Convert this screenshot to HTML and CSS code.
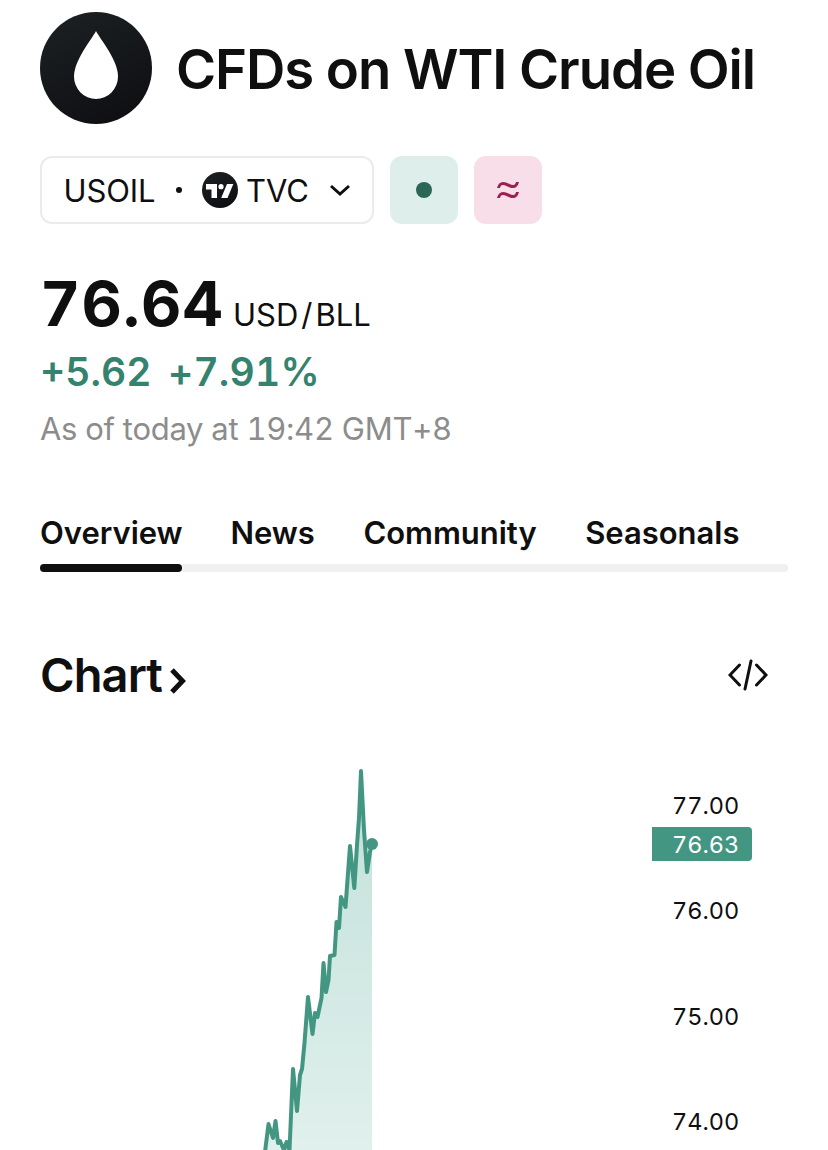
FILE: index.html
```html
<!DOCTYPE html>
<html lang="en">
  <head>
    <meta charset="UTF-8" />
    <meta name="viewport" content="width=device-width, initial-scale=1.0" />
    <title>USOIL</title>
    <link rel="stylesheet" href="styles.css">
  </head>
  <body>
    <div class="b-page">
      <div class="b-header">
        <svg class="b-header__logo" viewBox="0 0 112 112">
          <defs>
            <linearGradient id="logo-fill" x1="0.2" y1="0" x2="0.7" y2="1">
              <stop offset="0" stop-color="#1b2023" />
              <stop offset="1" stop-color="#0f0f12" />
            </linearGradient>
          </defs>
          <circle cx="56" cy="56" r="56" fill="url(#logo-fill)" />
          <path d="M56 19C60 27 78 48 78 64.500A22 22.500 0 0 1 34 64.500C34 48 52 27 56 19Z" fill="#fff" />
        </svg>
        <h1 class="b-header__title">CFDs on WTI Crude Oil</h1>
      </div>

      <div class="b-chips">
        <button class="b-symbol" type="button">
          <span class="b-symbol__name">USOIL</span>
          <span class="b-symbol__dot"></span>
          <svg class="b-symbol__logo" viewBox="0 0 36 36">
            <circle cx="18" cy="18" r="18" fill="url(#logo-fill)" />
            <path d="M4 12H15V26H9.500V17.500H4Z" fill="#fff" />
            <circle cx="19" cy="14.700" r="2.600" fill="#fff" />
            <path d="M25 12H31.300L25.500 26H19.200Z" fill="#fff" />
          </svg>
          <span class="b-symbol__exchange">TVC</span>
          <svg class="b-symbol__arrow" viewBox="0 0 22 14">
            <path d="M2 3L11 11L20 3" />
          </svg>
        </button>
        <div class="b-badge b-badge_color_green">
          <span class="b-badge__dot"></span>
        </div>
        <div class="b-badge b-badge_color_pink">
          <svg class="b-badge__waves" viewBox="0 0 24 20">
            <path d="M1 8C2 4 4 2 7 2C11 2 14 5 17 5C19 5 19.500 4 20 2H23C22 6 20 8 17 8C13 8 10 5 7 5C5 5 4.500 6 4 8Z" />
            <path d="M1 18C2 14 4 12 7 12C11 12 14 15 17 15C19 15 19.500 14 20 12H23C22 16 20 18 17 18C13 18 10 15 7 15C5 15 4.500 16 4 18Z" />
          </svg>
        </div>
      </div>

      <div class="b-price">
        <span class="b-price__value">76.64</span>
        <span class="b-price__unit">USD<span class="b-price__slash">/</span>BLL</span>
      </div>
      <div class="b-change">
        <span class="b-change__abs">+5.62</span>
        <span class="b-change__percent">+7.91%</span>
      </div>
      <p class="b-time">As of today at 19:42 GMT+8</p>

      <div class="b-tabs">
        <a class="b-tabs__item b-tabs__item_active">Overview</a>
        <a class="b-tabs__item">News</a>
        <a class="b-tabs__item">Community</a>
        <a class="b-tabs__item">Seasonals</a>
      </div>
      <div class="b-tabs-track"></div>

      <div class="b-section">
        <h2 class="b-section__title">Chart</h2>
        <svg class="b-section__arrow" viewBox="0 0 16 26">
          <path d="M2 2L12.500 13L2 24" />
        </svg>
        <svg class="b-section__code" viewBox="0 0 40 32">
          <path d="M11.500 6L2 16L11.500 26M28.500 6L38 16L28.500 26M23 2L17 30" />
        </svg>
      </div>

      <div class="b-chart">
        <svg class="b-chart__plot" viewBox="0 740 612 410">
          <defs>
            <linearGradient id="area-fill" gradientUnits="userSpaceOnUse" x1="0" y1="771" x2="0" y2="1150">
              <stop offset="0" stop-color="#c2e0d9" />
              <stop offset="1" stop-color="#e0f0ed" />
            </linearGradient>
          </defs>
          <g transform="translate(-40 0)">
            <path fill="url(#area-fill)" d="M265 1152L268.500 1124L273 1138L275.500 1121L278 1143L280 1141L284 1150L286.500 1142L289.500 1150L293 1069L297 1111L300 1075L302 1069L304.500 1043L308 997L312.500 1034L315 1013L317.500 1017L321.500 998L323.500 963L326 992L328.500 980L330 956L334.500 955L336.500 922L339 928L341 897L345.500 907L350 846L354.300 888L357 845L359 818L361 771L364 830L367 872L370 852L372 844V1152Z" />
            <path class="b-chart__line" d="M265 1152L268.500 1124L273 1138L275.500 1121L278 1143L280 1141L284 1150L286.500 1142L289.500 1150L293 1069L297 1111L300 1075L302 1069L304.500 1043L308 997L312.500 1034L315 1013L317.500 1017L321.500 998L323.500 963L326 992L328.500 980L330 956L334.500 955L336.500 922L339 928L341 897L345.500 907L350 846L354.300 888L357 845L359 818L361 771L364 830L367 872L370 852L372 844" />
            <circle cx="372" cy="844" r="6" fill="#439782" />
          </g>
        </svg>
        <div class="b-axis">
          <span class="b-axis__label">77.00</span>
          <span class="b-axis__label">76.00</span>
          <span class="b-axis__label">75.00</span>
          <span class="b-axis__label">74.00</span>
          <span class="b-axis__current">76.63</span>
        </div>
      </div>
    </div>
  </body>
</html>
```

FILE: styles.css
```css
* {
  box-sizing: border-box;
}

body {
  margin: 0;
  background: #fff;
  color: #0f0f0f;
  font-family: Inter, "Liberation Sans", sans-serif;
}

h1, h2, p {
  margin: 0;
}

.b-page {
  height: 1150px;
  padding: 12px 40px 0;
  overflow: hidden;
  white-space: nowrap;
}

.b-header {
  display: flex;
  align-items: center;
  gap: 24px;
  height: 112px;
}

.b-header__logo {
  width: 112px;
  height: 112px;
}

.b-header__title {
  padding-top: 1px;
  font-size: 54.5px;
  font-weight: 600;
  line-height: 64px;
  letter-spacing: -1.07px;
}

.b-chips {
  display: flex;
  gap: 16px;
  margin-top: 32px;
}

.b-symbol {
  display: flex;
  align-items: center;
  width: 334px;
  height: 68px;
  padding: 0 20px 0 21px;
  border: 2px solid #ebebeb;
  border-radius: 12px;
  background: #fff;
  color: #0f0f0f;
  font-family: inherit;
  font-size: 31px;
}

.b-symbol__name {
  width: 93px;
  letter-spacing: -0.1px;
}

.b-symbol__dot {
  width: 6px;
  height: 6px;
  margin-left: 20px;
  border-radius: 50%;
  background: #0f0f0f;
}

.b-symbol__logo {
  width: 36px;
  height: 36px;
  margin-left: 20px;
}

.b-symbol__exchange {
  width: 63px;
  margin-left: 8px;
}

.b-symbol__arrow {
  width: 22px;
  height: 14px;
  margin-left: 20px;
  fill: none;
  stroke: #0f0f0f;
  stroke-width: 3;
}

.b-badge {
  display: flex;
  align-items: center;
  justify-content: center;
  width: 68px;
  height: 68px;
  border-radius: 12px;
}

.b-badge_color_green {
  background: #deefeb;
}

.b-badge_color_pink {
  background: #f8dee9;
}

.b-badge__dot {
  width: 16px;
  height: 16px;
  border-radius: 50%;
  background: #2b6656;
}

.b-badge__waves {
  width: 24px;
  height: 20px;
  fill: #9c1f52;
}

.b-price {
  display: flex;
  align-items: baseline;
  height: 72px;
  margin-top: 43px;
  line-height: 72px;
}

.b-price__value {
  width: 193px;
  font-size: 62.5px;
  font-weight: 700;
  font-variant-numeric: tabular-nums;
  letter-spacing: 1.1px;
}

.b-price__unit {
  font-size: 31px;
}

.b-price__slash {
  margin: 0 3px;
}

.b-change {
  display: flex;
  margin-top: 9px;
  color: #35836e;
  font-size: 39px;
  font-weight: 600;
  font-variant-numeric: tabular-nums;
  line-height: 48px;
}

.b-change__abs {
  width: 128px;
}

.b-change__percent {
  letter-spacing: 0.2px;
}

.b-time {
  margin-top: 13px;
  color: #8c8c8c;
  font-size: 31px;
  font-variant-numeric: tabular-nums;
  line-height: 40px;
  letter-spacing: -0.27px;
}

.b-tabs {
  position: relative;
  display: flex;
  gap: 48.5px;
  height: 59px;
  margin-top: 64px;
}

.b-tabs__item {
  font-size: 31px;
  font-weight: 600;
  line-height: 40px;
  letter-spacing: -0.02px;
}

.b-tabs__item_active {
  display: flex;
  flex-direction: column;
  justify-content: space-between;
  width: 142px;
}

.b-tabs__item_active::after {
  content: "";
  height: 8px;
  border-radius: 4px;
  background: #0f0f0f;
}

.b-tabs-track {
  height: 8px;
  margin-top: -8px;
  border-radius: 4px;
  background: #f0f0f0;
}

.b-section {
  display: flex;
  align-items: center;
  height: 56px;
  margin-top: 75px;
  padding-right: 20px;
}

.b-section__title {
  font-size: 47px;
  font-weight: 600;
  line-height: 56px;
  letter-spacing: -0.9px;
}

.b-section__arrow {
  width: 16px;
  height: 26px;
  margin: 11px 0 0 8px;
  fill: none;
  stroke: #0f0f0f;
  stroke-width: 5;
}

.b-section__code {
  width: 40px;
  height: 32px;
  margin-left: auto;
  fill: none;
  stroke: #0f0f0f;
  stroke-width: 3;
  stroke-linecap: round;
}

.b-chart {
  display: flex;
  height: 410px;
  margin-top: 37px;
}

.b-chart__plot {
  width: 612px;
  height: 410px;
}

.b-chart__line {
  fill: none;
  stroke: #439782;
  stroke-width: 4;
  stroke-linecap: round;
  stroke-linejoin: round;
}

.b-axis {
  position: relative;
  display: flex;
  flex-direction: column;
  width: 100px;
  padding-top: 13px;
  font-size: 23.5px;
  font-variant-numeric: tabular-nums;
}

.b-axis__label {
  flex: none;
  height: 105.4px;
  padding-left: 20px;
  line-height: 105.4px;
}

/* last price, sits over the scale */
.b-axis__current {
  position: absolute;
  top: 87px;
  left: 0;
  width: 100px;
  height: 34px;
  padding-left: 20px;
  border-radius: 0 4px 4px 0;
  background: #439782;
  color: #fff;
  line-height: 36px;
}
```
